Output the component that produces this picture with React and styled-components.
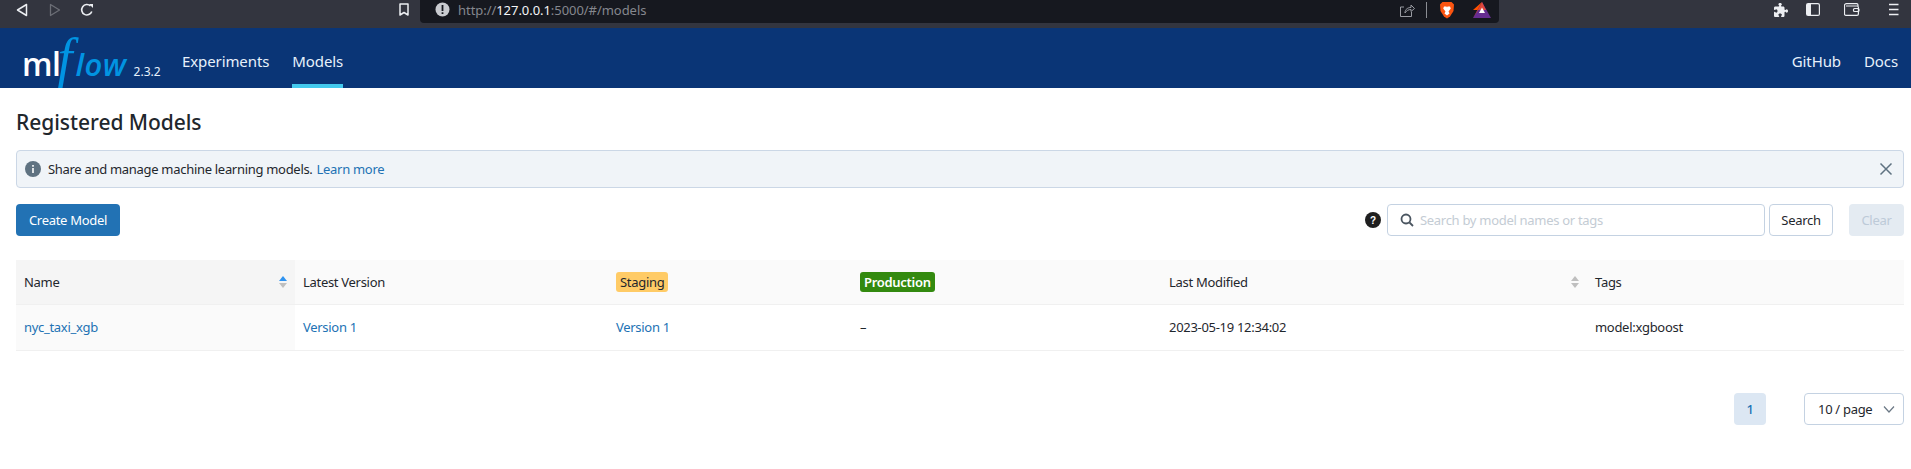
import styled, { createGlobalStyle } from "styled-components";
import { FaPuzzlePiece } from "react-icons/fa6";

const GlobalStyle = createGlobalStyle`
  html, body { margin: 0; padding: 0; background: #fff; }
  body {
    font-family: "Noto Sans", "Open Sans", sans-serif;
    font-size: 13px;
    letter-spacing: -0.3px;
    color: #1f272d;
  }
`;

const Page = styled.div`
  width: 1911px;
  height: 469px;
  overflow: hidden;
`;

/* browser chrome */
const BrowserBar = styled.div`
  display: flex;
  height: 28px;
  background: #33353f;
  align-items: flex-start;
`;
const NavIcons = styled.div`
  display: flex;
  align-items: center;
  width: 420px;
  height: 19px;
  padding-left: 16px;
  box-sizing: border-box;
`;
const ToolIcon = styled.svg`
  flex: none;
  margin-left: ${(p) => p.$left || 0}px;
  color: ${(p) => p.$color || "#eceef2"};
`;
const AddressBar = styled.div`
  display: flex;
  align-items: center;
  width: 1079px;
  height: 23px;
  padding: 0 0 4px 15px;
  box-sizing: border-box;
  background: #16181f;
  border-radius: 0 0 4px 4px;
`;
const Url = styled.div`
  margin-left: 8px;
  font-size: 13px;
  letter-spacing: -0.05px;
  color: #85878e;
  b { font-weight: 400; color: #f4f5f7; }
`;
const AddressRight = styled.div`
  display: flex;
  align-items: center;
  margin-left: auto;
  padding-right: 8px;
`;
const Divider = styled.div`
  width: 1px;
  height: 16px;
  margin-left: 11px;
  background: #8b8d93;
`;
const RightTools = styled.div`
  display: flex;
  align-items: center;
  height: 19px;
  padding-left: 275px;
  color: #eceef2;
`;

/* mlflow header */
const Header = styled.header`
  display: flex;
  align-items: stretch;
  height: 60px;
  padding-right: 13px;
  background: #0a3576;
  color: #e7f1fb;
`;
const Logo = styled.div`
  display: flex;
  align-items: baseline;
  width: 182px;
  padding-left: 22px;
  box-sizing: border-box;
  height: 60px;
  line-height: 60px;
  letter-spacing: 0;
`;
const LogoMl = styled.span`
  font-size: 32px;
  font-weight: 600;
  letter-spacing: -0.5px;
  color: #fff;
  font-family: "Open Sans", sans-serif;
`;
const LogoF = styled.span`
  font-family: "Liberation Serif", serif;
  font-style: italic;
  font-size: 54px;
  margin: 0 3px 0 -3px;
  color: #0194e2;
`;
const LogoFlow = styled.span`
  font-family: "Open Sans", sans-serif;
  font-style: italic;
  font-weight: 600;
  font-size: 31px;
  letter-spacing: 0.5px;
  color: #0194e2;
`;
const LogoVersion = styled.span`
  margin-left: 7px;
  font-size: 12px;
  color: #e7f1fb;
`;
const NavLink = styled.a`
  display: flex;
  align-items: center;
  box-sizing: border-box;
  padding-top: 9px;
  margin-left: ${(p) => p.$left || 0}px;
  font-size: 15px;
  letter-spacing: -0.1px;
  color: #e7f1fb;
  border-bottom: 4px solid ${(p) => (p.$active ? "#43c9ed" : "transparent")};
`;
const Spacer = styled.div`
  flex: 1;
`;

/* page body */
const Content = styled.main`
  padding: 0 7px 0 16px;
`;
const Title = styled.h1`
  margin: 0 0 14px;
  padding-top: 20px;
  height: 28px;
  font-size: 21px;
  line-height: 28px;
  font-weight: 500;
  letter-spacing: -0.05px;
`;
const Alert = styled.div`
  display: flex;
  align-items: center;
  height: 38px;
  box-sizing: border-box;
  padding: 0 8px;
  background: #f0f4f8;
  border: 1px solid #cbd7e6;
  border-radius: 4px;
`;
const AlertIcon = styled.svg`
  flex: none;
  margin-right: 7px;
`;
const Link = styled.a`
  color: #2272b4;
`;
const AlertText = styled.span`
  a { margin-left: 4px; }
`;
const Close = styled.svg`
  margin-left: auto;
  margin-right: 2px;
`;
const Controls = styled.div`
  display: flex;
  align-items: center;
  height: 32px;
  margin-top: 16px;
`;
const Button = styled.button`
  height: 32px;
  padding: 0;
  width: 64px;
  border-radius: 4px;
  font: inherit;
  font-size: 13px;
  letter-spacing: -0.3px;
  white-space: nowrap;
  border: 1px solid #c4d2e2;
  background: #fff;
  color: #1f272d;
`;
const PrimaryButton = styled(Button)`
  width: 104px;
  border: 0;
  background: #2272b4;
  color: #fff;
`;
const ClearButton = styled(Button)`
  width: 55px;
  margin-left: 16px;
  border: 0;
  background: #e4ebf2;
  color: #bdcad8;
`;
const HelpIcon = styled.svg`
  margin-left: auto;
  margin-right: 6px;
`;
const SearchBox = styled.div`
  display: flex;
  align-items: center;
  width: 378px;
  height: 32px;
  box-sizing: border-box;
  padding-left: 12px;
  margin-right: 4px;
  border: 1px solid #c4d2e2;
  border-radius: 4px;
  color: #c4ccd4;
`;
const SearchText = styled.span`
  margin-left: 6px;
`;

/* table */
const Table = styled.div`
  display: grid;
  grid-template-columns: 279px 313px 244px 309px 426px 1fr;
  margin-top: 24px;
`;
const HeadCell = styled.div`
  display: flex;
  align-items: center;
  justify-content: space-between;
  height: 45px;
  box-sizing: border-box;
  padding: 0 8px;
  font-weight: 400;
  background: ${(p) => (p.$sorted ? "#f5f5f5" : "#fafafa")};
  border-bottom: 1px solid #f0f0f0;
`;
const BodyCell = styled.div`
  display: flex;
  align-items: center;
  height: 46px;
  box-sizing: border-box;
  padding: 0 8px 1px;
  background: ${(p) => (p.$sorted ? "#fafafa" : "#fff")};
  border-bottom: 1px solid #f0f0f0;
`;
const Badge = styled.span`
  padding: 0 4px;
  line-height: 20px;
  border-radius: 3px;
  background: ${(p) => p.$bg};
  color: ${(p) => p.$fg};
  font-weight: ${(p) => p.$weight || 400};
`;
const SortIcon = styled.svg`
  flex: none;
  margin-right: -1px;
`;

/* pagination */
const Pager = styled.div`
  display: flex;
  justify-content: flex-end;
  align-items: center;
  margin-top: 42px;
`;
const PageNumber = styled.div`
  width: 32px;
  height: 32px;
  line-height: 32px;
  text-align: center;
  border-radius: 4px;
  font-weight: 500;
  background: #dce7f3;
  color: #2272b4;
`;
const PageSize = styled.div`
  display: flex;
  align-items: center;
  justify-content: space-between;
  width: 100px;
  height: 32px;
  box-sizing: border-box;
  padding: 0 7px 0 13px;
  margin-left: 38px;
  border: 1px solid #c4d2e2;
  border-radius: 4px;
`;

function SortArrows({ up, down }) {
  return (
    <SortIcon width="10" height="14" viewBox="0 0 10 14">
      <path d="M5 1 9 6H1z" fill={up} />
      <path d="M5 13 1 8h8z" fill={down} />
    </SortIcon>
  );
}

function App() {
  return (
    <Page>
      <GlobalStyle />
      <BrowserBar>
        <NavIcons>
          <ToolIcon width="12" height="14" viewBox="0 0 12 14" fill="none" stroke="currentColor" strokeWidth="1.5">
            <path d="M10.5 1.5v11L1.5 7z" strokeLinejoin="round" />
          </ToolIcon>
          <ToolIcon $left={21} $color="#6c6e76" width="12" height="14" viewBox="0 0 12 14" fill="none" stroke="currentColor" strokeWidth="1.3">
            <path d="M1.5 1.5v11L10.5 7z" strokeLinejoin="round" />
          </ToolIcon>
          <ToolIcon $left={19} width="14" height="14" viewBox="0 0 14 14" fill="none" stroke="currentColor" strokeWidth="1.6">
            <path d="M11.8 8.5A5.2 5.2 0 1 1 10.5 3" />
            <path d="M9 1h4v4z" fill="currentColor" stroke="none" />
          </ToolIcon>
          <ToolIcon $left={305} width="10" height="13" viewBox="0 0 10 13" fill="none" stroke="currentColor" strokeWidth="1.5">
            <path d="M1 1h8v11L5 9.5 1 12z" strokeLinejoin="round" />
          </ToolIcon>
        </NavIcons>
        <AddressBar>
          <svg width="15" height="15" viewBox="0 0 15 15">
            <circle cx="7.5" cy="7.5" r="7" fill="#c9cbd0" />
            <path d="M6.6 3h1.8v6H6.6zM6.6 10.2h1.8V12H6.6z" fill="#16181f" />
          </svg>
          <Url>
            http://<b>127.0.0.1</b>:5000/#/models
          </Url>
          <AddressRight>
            <ToolIcon width="16" height="16" viewBox="0 0 16 16" $color="#9a9ca3" fill="none" stroke="currentColor" strokeWidth="1">
              <path d="M5 5H1.5v9.5h11V10" />
              <path d="M6 11c0-4 3-5.500 6-5.500V3l3.500 3.500L12 9.500V7.500C9.500 7.500 7.500 8.500 6 11z" />
            </ToolIcon>
            <Divider />
            <ToolIcon $left={12} width="16" height="18" viewBox="0 0 16 18">
              <path d="M3.500 1h9L15 3.500 14.500 10 11 15.500 8 17.500 5 15.500 1.500 10 1 3.500z" fill="#fb5410" />
              <path d="M5 5.500h2.500L8 6.500l.5-1H11l.8 2L9.500 10.500 10.500 12.500 8 14.500 5.500 12.500 6.500 10.500 4.200 7.500z" fill="#fff" />
            </ToolIcon>
            <ToolIcon $left={18} width="18" height="16" viewBox="0 0 18 16">
              <path d="M9 0 18 16H0z" fill="#662d91" />
              <path d="M9 0 4.500 8H0z" fill="#ff5000" />
              <path d="M9 0 0 16 5 8z" fill="#ff5000" />
              <path d="M9 0 13 8H5z" fill="#e0473a" />
              <path d="M9 5.500 12 11H6z" fill="#fff" />
            </ToolIcon>
          </AddressRight>
        </AddressBar>
        <RightTools>
          <FaPuzzlePiece size={14} />
          <ToolIcon $left={18} width="14" height="13" viewBox="0 0 14 13" fill="none" stroke="currentColor" strokeWidth="1.2">
            <rect x="0.6" y="0.6" width="12.8" height="11.800" rx="1.500" />
            <path d="M1 1h4v11H1z" fill="currentColor" stroke="none" />
          </ToolIcon>
          <ToolIcon $left={24} width="16" height="13" viewBox="0 0 16 13" fill="none" stroke="currentColor" strokeWidth="1.200">
            <path d="M14 3V2a1.400 1.400 0 0 0-1.400-1.400H2.500a2 2 0 0 0-2 2v8a1.500 1.500 0 0 0 1.500 1.800h11a1.400 1.400 0 0 0 1.400-1.400V4.400A1.400 1.400 0 0 0 13 3H2" />
            <rect x="9.500" y="5.500" width="5.500" height="3" rx="1" />
          </ToolIcon>
          <ToolIcon $left={28} width="11" height="13" viewBox="0 0 11 13" stroke="currentColor" strokeWidth="1.500">
            <path d="M1 1.500h9.500M1 6.500h9.500M1 11.500h9.500" />
          </ToolIcon>
        </RightTools>
      </BrowserBar>

      <Header>
        <Logo>
          <LogoMl>ml</LogoMl>
          <LogoF>f</LogoF>
          <LogoFlow>low</LogoFlow>
          <LogoVersion>2.3.2</LogoVersion>
        </Logo>
        <NavLink>Experiments</NavLink>
        <NavLink $active $left={23}>Models</NavLink>
        <Spacer />
        <NavLink>GitHub</NavLink>
        <NavLink $left={23}>Docs</NavLink>
      </Header>

      <Content>
        <Title>Registered Models</Title>
        <Alert>
          <AlertIcon width="16" height="16" viewBox="0 0 16 16">
            <circle cx="8" cy="8" r="8" fill="#5f7281" />
            <path d="M7.200 7h1.600v5H7.200zM7.200 4h1.600v1.700H7.200z" fill="#fff" />
          </AlertIcon>
          <AlertText>
            Share and manage machine learning models.
            <Link>Learn more</Link>
          </AlertText>
          <Close width="14" height="14" viewBox="0 0 14 14" stroke="#5f7281" strokeWidth="1.500">
            <path d="M1.500 1.500 12.500 12.500M12.500 1.500 1.500 12.500" />
          </Close>
        </Alert>

        <Controls>
          <PrimaryButton>Create Model</PrimaryButton>
          <HelpIcon width="16" height="16" viewBox="0 0 16 16">
            <circle cx="8" cy="8" r="8" fill="#1f1f1f" />
            <text x="8" y="11.500" textAnchor="middle" fontSize="10" fontWeight="700" fill="#fff" fontFamily="Liberation Sans, sans-serif">?</text>
          </HelpIcon>
          <SearchBox>
            <svg width="14" height="14" viewBox="0 0 14 14" fill="none" stroke="#4a5560" strokeWidth="1.800">
              <circle cx="6" cy="6" r="4.500" />
              <path d="M9.500 9.500 13 13" />
            </svg>
            <SearchText>Search by model names or tags</SearchText>
          </SearchBox>
          <Button>Search</Button>
          <ClearButton>Clear</ClearButton>
        </Controls>

        <Table>
          <HeadCell $sorted>
            Name
            <SortArrows up="#2f93f0" down="#bfbfbf" />
          </HeadCell>
          <HeadCell>Latest Version</HeadCell>
          <HeadCell>
            <Badge $bg="#ffcb66" $fg="#1f272d">Staging</Badge>
          </HeadCell>
          <HeadCell>
            <Badge $bg="#338a0f" $fg="#fff" $weight={600}>Production</Badge>
          </HeadCell>
          <HeadCell>
            Last Modified
            <SortArrows up="#bfbfbf" down="#bfbfbf" />
          </HeadCell>
          <HeadCell>Tags</HeadCell>

          <BodyCell $sorted><Link>nyc_taxi_xgb</Link></BodyCell>
          <BodyCell><Link>Version 1</Link></BodyCell>
          <BodyCell><Link>Version 1</Link></BodyCell>
          <BodyCell>–</BodyCell>
          <BodyCell>2023-05-19 12:34:02</BodyCell>
          <BodyCell>model:xgboost</BodyCell>
        </Table>

        <Pager>
          <PageNumber>1</PageNumber>
          <PageSize>
            10 / page
            <svg width="14" height="14" viewBox="0 0 14 14" fill="none" stroke="#6b7885" strokeWidth="1.200">
              <path d="M2 4.500 7 10l5-5.500" />
            </svg>
          </PageSize>
        </Pager>
      </Content>
    </Page>
  );
}

export default App;
